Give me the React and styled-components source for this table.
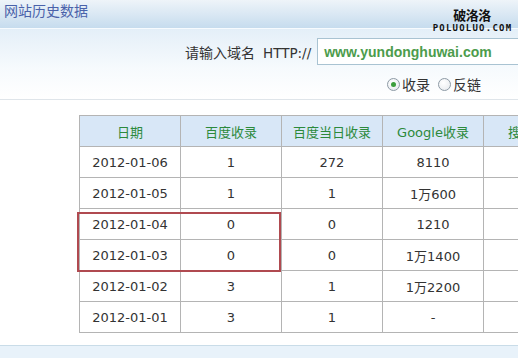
import React from "react";
import styled, { createGlobalStyle } from "styled-components";

const Global = createGlobalStyle`
  html, body { margin: 0; padding: 0; background: #fff; }
  body { font-family: "DejaVu Sans", "Noto Sans CJK SC", sans-serif; overflow: hidden; }
`;

const Page = styled.div`
  position: relative;
  width: 518px;
  height: 358px;
  overflow: hidden;
  display: flex;
  flex-direction: column;
`;

const TitleBar = styled.div`
  height: 28px;
  flex: none;
  display: flex;
  align-items: center;
  padding-left: 4px;
  background: linear-gradient(#eef4f9, #dce9f4 45%, #c6dcee);
  box-sizing: border-box;
`;

const Title = styled.span`
  font-family: "Noto Sans CJK SC", sans-serif;
  font-size: 14px;
  color: #4a62aa;
  margin-top: -8px;
`;

const Watermark = styled.div`
  position: absolute;
  left: 436px;
  top: 8px;
  width: 72px;
  display: flex;
  flex-direction: column;
  align-items: center;
  line-height: 1;
`;

const WmCn = styled.span`
  font-family: "Noto Sans CJK SC", sans-serif;
  font-weight: 700;
  font-size: 13px;
  color: #111;
  letter-spacing: -0.5px;
`;

const WmEn = styled.span`
  font-family: "DejaVu Sans Mono", monospace;
  font-weight: 700;
  font-size: 8px;
  color: #111;
  letter-spacing: 1.1px;
  margin-top: 4px;
  transform: scaleX(1.12);
`;

const SearchPanel = styled.div`
  flex: none;
  height: 72px;
  box-sizing: border-box;
  border-top: 1px solid #f7fbfe;
  border-bottom: 1px solid #dfe5ea;
  background: linear-gradient(#e4eff8, #f6fafd 55%, #ffffff);
  padding: 9px 0 0 185px;
  display: flex;
  flex-direction: column;
`;

const SearchRow = styled.div`
  display: flex;
  align-items: center;
  height: 27px;
  gap: 6px;
`;

const Label = styled.span`
  font-family: "Noto Sans CJK SC", sans-serif;
  font-size: 14px;
  color: #333;
  white-space: nowrap;
  & > b {
    font-family: "DejaVu Sans", sans-serif;
    font-weight: 400;
    font-size: 13.5px;
    margin-left: 8px;
  }
`;

const Input = styled.div`
  flex: none;
  width: 260px;
  height: 27px;
  box-sizing: border-box;
  border: 1px solid #a9c3d2;
  background: #fff;
  padding-left: 6px;
  display: flex;
  align-items: center;
  font-family: "Liberation Sans", Arial, sans-serif;
  font-weight: 700;
  font-size: 14px;
  color: #4c9c4c;
`;

const RadioRow = styled.div`
  display: flex;
  align-items: center;
  margin: 11px 0 0 202px;
  gap: 8px;
`;

const RadioItem = styled.label`
  display: flex;
  align-items: center;
  gap: 2px;
  font-family: "Noto Sans CJK SC", sans-serif;
  font-size: 14px;
  color: #333;
  line-height: 16px;
`;

const RadioDot = styled.span`
  width: 13px;
  height: 13px;
  box-sizing: border-box;
  border-radius: 50%;
  border: 1px solid #8d9aa5;
  background: radial-gradient(circle at 40% 35%, #ffffff, #e4e8ec);
  display: flex;
  align-items: center;
  justify-content: center;
  &::after {
    content: "";
    width: 5px;
    height: 5px;
    border-radius: 50%;
    background: ${(p) => (p.$checked ? "#3c9e3c" : "transparent")};
  }
`;

const TableArea = styled.div`
  flex: 1;
  padding: 15px 0 0 79px;
  position: relative;
`;

const TableWrap = styled.div`
  position: relative;
  width: max-content;
`;

const Table = styled.table`
  border-collapse: collapse;
  table-layout: fixed;
  width: 506px;
`;

const HeadCell = styled.th`
  width: 100px;
  height: 30px;
  padding: 0;
  border: 1px solid #b4b4b4;
  background: #d8e7f7;
  font-family: "DejaVu Sans", "Noto Sans CJK SC", sans-serif;
  font-weight: 400;
  font-size: 13px;
  color: #2c8a3c;
  text-align: center;
  white-space: nowrap;
  overflow: hidden;
`;

const Cell = styled.td`
  height: 30px;
  padding: 0;
  border: 1px solid #b4b4b4;
  font-family: "DejaVu Sans", "Noto Sans CJK SC", sans-serif;
  font-size: 13px;
  color: #333;
  text-align: center;
  white-space: nowrap;
`;

const Highlight = styled.div`
  position: absolute;
  left: -2px;
  top: 97px;
  width: 204px;
  height: 60px;
  box-sizing: border-box;
  border: 2px solid #b04a50;
  pointer-events: none;
`;

const BottomBand = styled.div`
  flex: none;
  height: 13px;
  box-sizing: border-box;
  border-top: 1px solid #c9dce8;
  background: #e8f2fa;
`;

const headers = ["日期", "百度收录", "百度当日收录", "Google收录", "搜狗收录"];

const rows = [
  ["2012-01-06", "1", "272", "8110", ""],
  ["2012-01-05", "1", "1", "1万600", ""],
  ["2012-01-04", "0", "0", "1210", ""],
  ["2012-01-03", "0", "0", "1万1400", ""],
  ["2012-01-02", "3", "1", "1万2200", ""],
  ["2012-01-01", "3", "1", "-", ""],
];

export default function App() {
  return (
    <Page>
      <Global />
      <TitleBar>
        <Title>网站历史数据</Title>
      </TitleBar>
      <SearchPanel>
        <SearchRow>
          <Label>
            请输入域名<b>HTTP://</b>
          </Label>
          <Input>www.yundonghuwai.com</Input>
        </SearchRow>
        <RadioRow>
          <RadioItem>
            <RadioDot $checked />
            收录
          </RadioItem>
          <RadioItem>
            <RadioDot />
            反链
          </RadioItem>
        </RadioRow>
      </SearchPanel>
      <TableArea>
        <TableWrap>
          <Table>
            <thead>
              <tr>
                {headers.map((h) => (
                  <HeadCell key={h}>{h}</HeadCell>
                ))}
              </tr>
            </thead>
            <tbody>
              {rows.map((r) => (
                <tr key={r[0]}>
                  {r.map((c, i) => (
                    <Cell key={i}>{c}</Cell>
                  ))}
                </tr>
              ))}
            </tbody>
          </Table>
          <Highlight />
        </TableWrap>
      </TableArea>
      <BottomBand />
      <Watermark>
        <WmCn>破洛洛</WmCn>
        <WmEn>POLUOLUO.COM</WmEn>
      </Watermark>
    </Page>
  );
}
